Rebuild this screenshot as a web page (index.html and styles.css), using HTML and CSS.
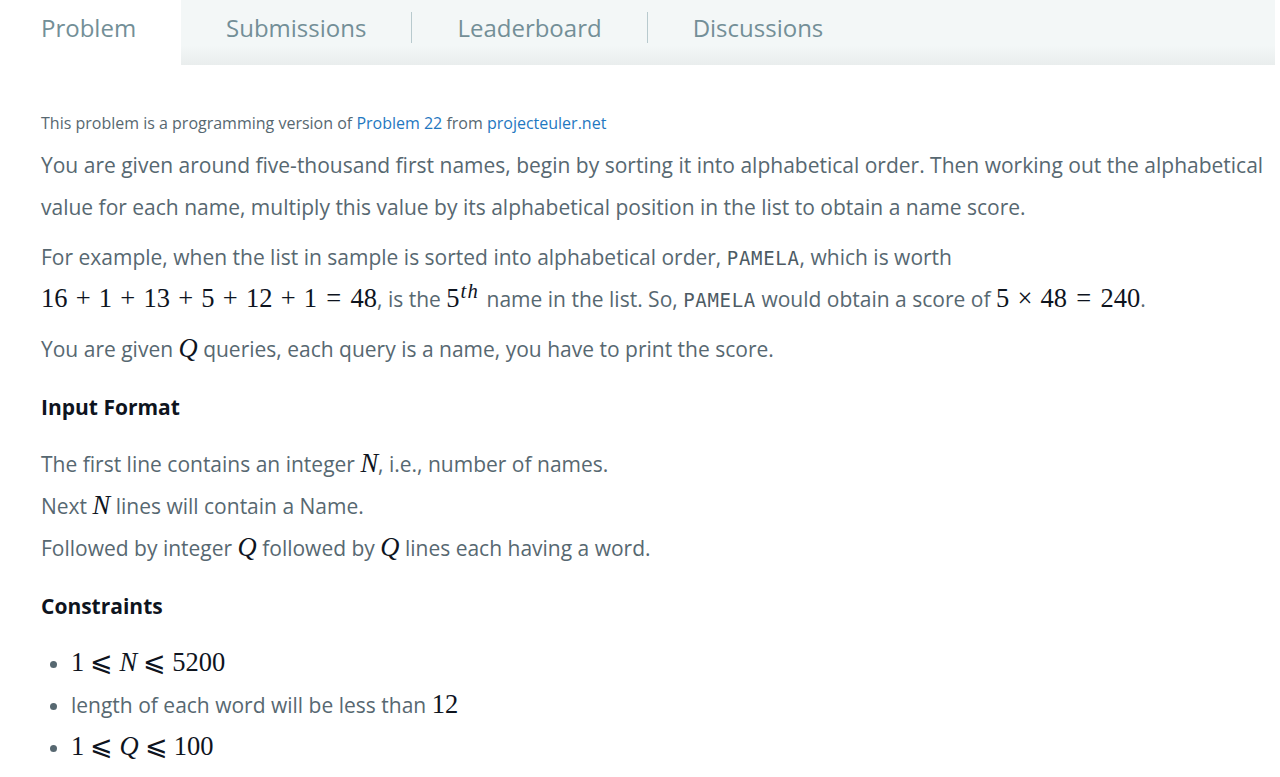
FILE: index.html
```html
<!DOCTYPE html>
<html>
<head>
<meta charset="utf-8">
<link rel="stylesheet" href="styles.css">
</head>
<body>
<nav class="tabs">
  <div class="tab active">Problem</div>
  <div class="tab">Submissions</div>
  <div class="sep"></div>
  <div class="tab">Leaderboard</div>
  <div class="sep"></div>
  <div class="tab">Discussions</div>
</nav>
<main class="content">
  <p class="note">This problem is a programming version of <a href="#">Problem 22</a> from <a href="#">projecteuler.net</a></p>
  <p class="para">You are given around five-thousand first names, begin by sorting it into alphabetical order. Then working out the alphabetical value for each name, multiply this value by its alphabetical position in the list to obtain a name score.</p>
  <p class="para">For example, when the list in sample is sorted into alphabetical order, <code>PAMELA</code>, which is worth <span class="m">16<span class="bin">+</span>1<span class="bin">+</span>13<span class="bin">+</span>5<span class="bin">+</span>12<span class="bin">+</span>1<span class="rel">=</span>48</span>, is the <span class="m">5<sup class="mi">th</sup></span> name in the list. So, <code>PAMELA</code> would obtain a score of <span class="m">5<span class="bin">×</span>48<span class="rel">=</span>240</span>.</p>
  <p class="para">You are given <span class="m mi">Q</span> queries, each query is a name, you have to print the score.</p>
  <h3 class="head">Input Format</h3>
  <p class="line">The first line contains an integer <span class="m mi">N</span>, i.e., number of names.</p>
  <p class="line">Next <span class="m mi">N</span> lines will contain a Name.</p>
  <p class="line">Followed by integer <span class="m mi">Q</span> followed by <span class="m mi">Q</span> lines each having a word.</p>
  <h3 class="head">Constraints</h3>
  <ul class="list">
    <li><span class="m">1<span class="le">⩽</span><span class="mi">N</span><span class="le">⩽</span>5200</span></li>
    <li>length of each word will be less than <span class="m">12</span></li>
    <li><span class="m">1<span class="le">⩽</span><span class="mi">Q</span><span class="le">⩽</span>100</span></li>
  </ul>
</main>
</body>
</html>
```

FILE: styles.css
```css
html, body {
  margin: 0;
  padding: 0;
  background: #ffffff;
}
body {
  font-family: "Open Sans", "Noto Sans", sans-serif;
  color: #576871;
}
.tabs {
  display: flex;
  align-items: center;
  height: 65px;
  width: 1275px;
  background: linear-gradient(to bottom, #f3f7f7 0%, #f3f7f7 70%, #e9eded 100%);
}
.tab {
  height: 65px;
  display: flex;
  align-items: center;
  font-size: 24px;
  color: #738f97;
  padding: 0 45px 10px;
  box-sizing: border-box;
}
.tab.active {
  background: #ffffff;
  width: 181px;
  padding: 0 0 10px 41px;
}
.sep {
  width: 1px;
  height: 31px;
  background: #b8cace;
  margin-top: -11px;
}
.content {
  padding: 40px 0 0 41px;
  width: 1280px;
  box-sizing: border-box;
}
.note {
  font-size: 16px;
  margin: 0 0 3px;
  line-height: 36px;
}
.note a {
  color: #1f78c1;
  text-decoration: none;
}
.para {
  font-size: 21px;
  line-height: 42px;
  margin: 0 0 8px;
}
.line {
  font-size: 21px;
  line-height: 42px;
  margin: 0;
}
code {
  font-family: "DejaVu Sans Mono", "Liberation Mono", monospace;
  font-size: 19px;
  letter-spacing: 0.7px;
  color: #4d5b64;
  line-height: 0;
}
.m {
  font-family: "Liberation Serif", "DejaVu Serif", serif;
  font-size: 26.5px;
  line-height: 0;
  color: #0e141e;
  white-space: nowrap;
}
.mi {
  font-style: italic;
}
.bin {
  margin: 0 0.31em;
}
.rel {
  margin: 0 0.35em;
}
.le {
  margin: 0 0.23em;
}
sup.mi {
  font-size: 0.78em;
  vertical-align: 0.45em;
  line-height: 0;
  letter-spacing: 0.06em;
  margin-left: 1px;
  margin-right: 2px;
}
.head {
  font-size: 21px;
  font-weight: 700;
  color: #0e141e;
  margin: 22px 0 21px;
  line-height: 30px;
}
.list {
  margin: 0;
  padding: 0 0 0 30px;
  font-size: 21px;
  line-height: 42px;
}
.list li {
  margin: 0;
}
.list li::marker {
  color: #576871;
}
```
